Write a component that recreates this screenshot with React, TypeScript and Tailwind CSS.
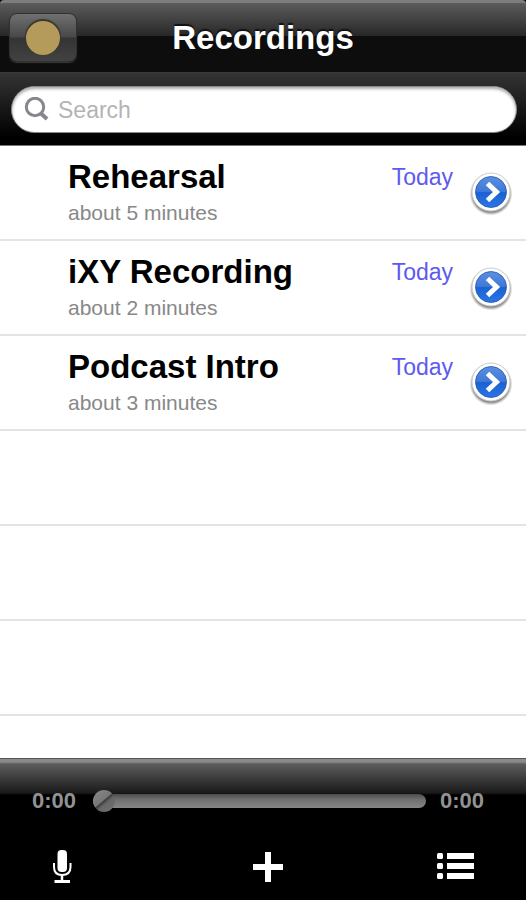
import React, { useState } from 'react';

interface Recording {
  title: string;
  length: string;
  date: string;
}

const recordings: Recording[] = [
  { title: 'Rehearsal', length: 'about 5 minutes', date: 'Today' },
  { title: 'iXY Recording', length: 'about 2 minutes', date: 'Today' },
  { title: 'Podcast Intro', length: 'about 3 minutes', date: 'Today' },
];

const NavBar: React.FC = () => {
  return (
    <header className="grid h-[72px] grid-cols-[1fr_auto_1fr] items-center rounded-t-[4px] border-t-3 border-[#7d7d7d] bg-[linear-gradient(to_bottom,#5c5c5c_0,#272727_33px,#0d0d0d_33px,#0d0d0d_100%)] px-[9px]">
      <button
        type="button"
        aria-label="Record"
        className="flex h-[49px] w-[68px] items-center justify-center rounded-lg border border-[#303030] bg-[linear-gradient(to_bottom,#707070,#484848_49%,#343434_51%,#424242)] shadow-[0_1px_1px_#3a3a3a]"
      >
        <span className="size-[34px] rounded-full bg-[#b59b5b] shadow-[0_-1px_1px_1px_#39372f]"></span>
      </button>
      <h1 className="text-[33px] leading-9 font-bold text-white [text-shadow:0_-2px_1px_#111]">Recordings</h1>
    </header>
  );
};

const SearchBar: React.FC = () => {
  return (
    <div className="h-[74px] border-t border-b border-t-[#3a3a3a] border-b-[#777] bg-[linear-gradient(to_bottom,#343434,#000_90%)] pt-[13px] pr-[9px] pl-[11px]">
      <label className="flex h-[47px] items-center gap-2 rounded-full border border-[#888] bg-white pl-3 shadow-[inset_0_2px_3px_#aaa]">
        <svg viewBox="0 0 26 26" className="size-[26px]" fill="none" stroke="#85878c">
          <circle cx="11" cy="10" r="8.7" strokeWidth="3" />
          <path d="M17 16.5L23 22" strokeWidth="4" />
        </svg>
        <input
          type="search"
          aria-label="Search"
          placeholder="Search"
          className="min-w-0 flex-1 bg-transparent text-[23px] leading-7 text-black outline-none placeholder:text-[#b4b4b4]"
        />
      </label>
    </div>
  );
};

const RecordingRow: React.FC<{ recording: Recording }> = ({ recording }) => {
  return (
    <li className="flex h-[95px] border-b-2 border-[#e4e4e4] bg-white pr-[13px] pl-[68px]">
      <div className="min-w-0 flex-1 pt-[11px]">
        <h2 className="truncate text-[33px] leading-10 font-bold text-black">{recording.title}</h2>
        <p className="text-[21px] leading-8 text-[#888]">{recording.length}</p>
      </div>
      <span className="pt-[17px] text-[23px] leading-7 text-[#5d5af0]">{recording.date}</span>
      <button type="button" aria-label={`Open ${recording.title}`} className="ml-4 self-center">
        <svg viewBox="0 0 44 44" className="size-11">
          <defs>
            <radialGradient id="halo">
              <stop offset="84%" stopColor="#777" stopOpacity="0.9" />
              <stop offset="100%" stopColor="#999" stopOpacity="0" />
            </radialGradient>
            <linearGradient id="blue" x1="0" y1="0" x2="0" y2="1">
              <stop offset="0" stopColor="#5b8fe0" />
              <stop offset="0.48" stopColor="#3f79d8" />
              <stop offset="0.52" stopColor="#1c61d2" />
              <stop offset="1" stopColor="#2a76e6" />
            </linearGradient>
          </defs>
          <circle cx="22" cy="23" r="21.5" fill="url(#halo)" />
          <circle cx="22" cy="21" r="19" fill="#fff" stroke="#ccc" strokeWidth="1" />
          <circle cx="22" cy="21" r="15.5" fill="url(#blue)" stroke="#2458b4" strokeWidth="0.8" />
          <path d="M18.5 12.5L27.5 21L18.5 29.5" fill="none" stroke="#fff" strokeWidth="5" />
        </svg>
      </button>
    </li>
  );
};

const Player: React.FC = () => {
  const [position, setPosition] = useState(0);

  return (
    <div className="flex items-center pr-[41px] pl-8">
      <span className="w-[61px] text-[22px] leading-7 font-bold text-[#929292]">0:00</span>
      <input
        type="range"
        aria-label="Playback position"
        min={0}
        max={100}
        value={position}
        onChange={(e) => setPosition(Number(e.target.value))}
        className="h-[23px] min-w-0 flex-1 cursor-pointer appearance-none bg-transparent [&::-webkit-slider-runnable-track]:h-[14px] [&::-webkit-slider-runnable-track]:rounded-full [&::-webkit-slider-runnable-track]:bg-[linear-gradient(to_bottom,#4c4c4c,#707070_40%,#868686)] [&::-webkit-slider-thumb]:-mt-1 [&::-webkit-slider-thumb]:size-[22px] [&::-webkit-slider-thumb]:appearance-none [&::-webkit-slider-thumb]:rounded-full [&::-webkit-slider-thumb]:bg-[linear-gradient(140deg,#888_0%,#777_46%,#3c3c3c_50%,#666_60%,#747474_100%)]"
      />
      <span className="w-[59px] pl-[14px] text-[22px] leading-7 font-bold text-[#929292]">0:00</span>
    </div>
  );
};

const Toolbar: React.FC = () => {
  return (
    <nav className="flex items-center justify-between pr-[50px] pl-[46px]">
      <button type="button" aria-label="Microphone" className="w-[54px]">
        <svg viewBox="0 0 32 40" className="h-10 w-8" fill="none" stroke="#fff">
          <rect x="11.5" y="3" width="9.5" height="22" rx="4" fill="#fff" stroke="none" />
          <path d="M8 16V20Q8 28 16 28Q24.500 28 24.500 20V16" strokeWidth="2" />
          <path d="M16 28V34" strokeWidth="2.5" />
          <path d="M8.500 34.500H24" strokeWidth="3" />
        </svg>
      </button>
      <button type="button" aria-label="Add">
        <svg viewBox="0 0 32 40" className="h-10 w-8">
          <path d="M13 5H19V17H31V23H19V35H13V23H1V17H13Z" fill="#fff" />
        </svg>
      </button>
      <button type="button" aria-label="List">
        <svg viewBox="0 0 40 40" className="size-10" fill="#fff">
          {[6, 16, 26].map((y) => (
            <g key={y}>
              <rect x="1" y={y} width="6" height="6" rx="1.5" />
              <rect x="11" y={y} width="27" height="6" />
            </g>
          ))}
        </svg>
      </button>
    </nav>
  );
};

const App: React.FC = () => {
  return (
    <div className="flex min-h-screen flex-col bg-black font-['Liberation_Sans',Arial,sans-serif]">
      <NavBar />
      <SearchBar />
      {/* Ruled background continues below the last recording */}
      <main className="flex-1 bg-[repeating-linear-gradient(to_bottom,#fff_0,#fff_93px,#e4e4e4_93px,#e4e4e4_95px)]">
        <ul>
          {recordings.map((recording) => (
            <RecordingRow key={recording.title} recording={recording} />
          ))}
        </ul>
      </main>
      <footer className="border-t border-[#555] bg-[linear-gradient(to_bottom,#8a8a8a_0,#8a8a8a_3px,#5c5c5c_5px,#1a1a1a_34px,#000_36px)] pt-7 pb-[13px]">
        <Player />
        <div className="h-8"></div>
        <Toolbar />
      </footer>
    </div>
  );
};

export default App;
